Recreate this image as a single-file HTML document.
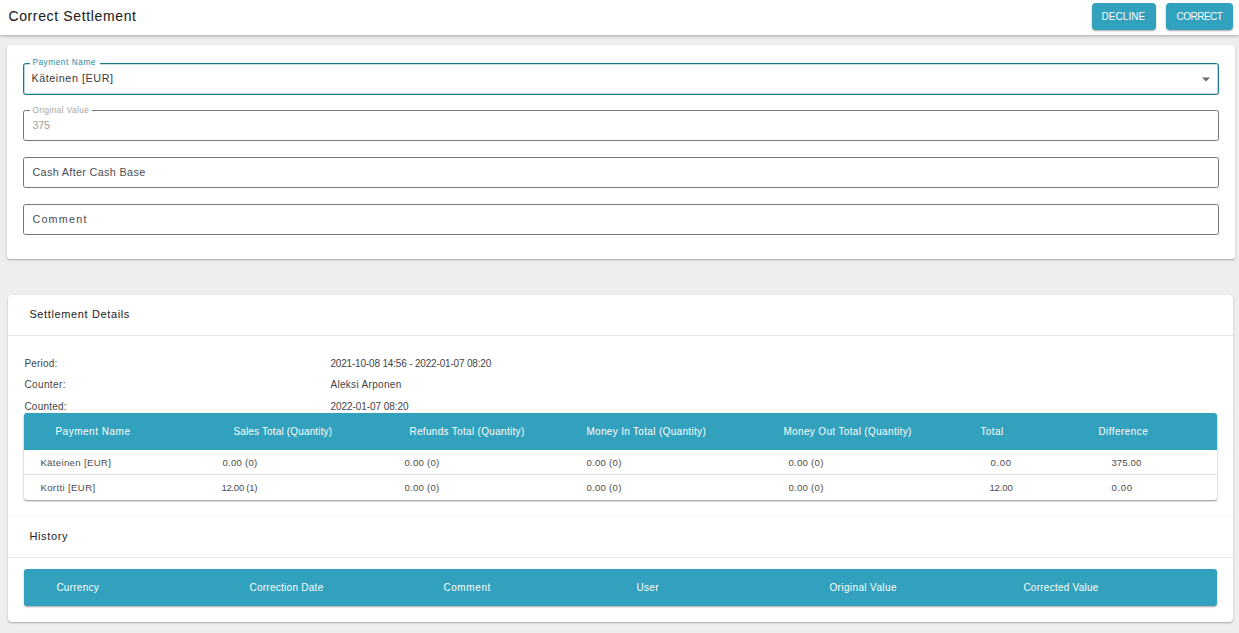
<!DOCTYPE html>
<html><head><meta charset="utf-8"><title>Correct Settlement</title>
<style>
html,body{margin:0;padding:0;}
body{width:1239px;height:633px;overflow:hidden;background:#eeeeee;position:relative;font-family:"Liberation Sans",sans-serif;}
.t{position:absolute;white-space:nowrap;line-height:1.149;font-family:"Liberation Sans",sans-serif;}
.hdr{position:absolute;left:0;top:0;width:1239px;height:35px;background:#fff;box-shadow:0 1px 3px rgba(0,0,0,.3);}
.btn{position:absolute;top:3px;height:27px;background:#32a1bd;border-radius:4px;box-shadow:0 1px 2px rgba(0,0,0,.35);}
.card{position:absolute;background:#fff;border-radius:3px;box-shadow:0 1px 2px rgba(0,0,0,.3);}
.fld{position:absolute;left:23px;width:1194px;border:1px solid #767676;border-radius:2.5px;}
.leg{position:absolute;height:4px;background:#fff;top:-2px;}
.div{position:absolute;left:0;right:0;height:1px;background:#e3e5e8;}
.th{position:absolute;left:24px;width:1193px;background:#32a1bd;}

</style></head><body>
<div class="hdr"></div>
<div class="btn" style="left:1092px;width:64px"></div>
<div class="btn" style="left:1166px;width:67px"></div>
<div class="card" style="left:7px;top:45px;width:1228px;height:214px">
  <div class="fld" style="left:16px;top:18px;height:30px;border:1px solid #1a7890;box-shadow:inset 0 0 0 0.3px #1a7890;width:1194px"><div class="leg" style="left:6px;width:70px"></div></div>
  <div class="fld" style="left:16px;top:65px;height:29px"><div class="leg" style="left:6px;width:62px"></div></div>
  <div class="fld" style="left:16px;top:112px;height:29px"></div>
  <div class="fld" style="left:16px;top:159px;height:29px"></div>
  <svg style="position:absolute;left:1195px;top:32px" width="9" height="5"><path d="M0 0.5 L8 0.5 L4 4.4Z" fill="#6a6a6a"/></svg>
</div>
<div class="card" style="left:8px;top:295px;width:1225px;height:221px;border-radius:4px 4px 0 0">
  <div class="div" style="top:40px"></div>
</div>
<div class="card" style="left:8px;top:516px;width:1225px;height:106px;border-radius:0 0 4px 4px">
  <div class="div" style="top:41px"></div>
  <div style="position:absolute;left:0;right:0;top:-1px;height:1px;background:#f6f6f6"></div>
</div>
<div style="position:absolute;left:24px;top:413px;width:1193px;height:87px;background:#fff;border-radius:3px;box-shadow:0 1px 2px rgba(0,0,0,.45);overflow:hidden">
  <div style="position:absolute;left:0;top:0;width:100%;height:37px;background:#32a1bd"></div>
  <div style="position:absolute;left:0;top:61px;width:100%;height:1px;background:#e0e0e0"></div>
</div>
<div style="position:absolute;left:24px;top:569px;width:1193px;height:37px;background:#32a1bd;border-radius:3px;box-shadow:0 1px 2px rgba(0,0,0,.35)"></div>

<span class="t" style="left:8.40px;top:8.09px;font-size:14px;color:#1e1e1e;letter-spacing:0.641px;-webkit-text-stroke:0.1px #1e1e1e;">Correct Settlement</span>
<span class="t" style="left:1101.40px;top:10.99px;font-size:10.0px;color:#ffffff;letter-spacing:0.083px;">DECLINE</span>
<span class="t" style="left:1176.40px;top:10.99px;font-size:10.0px;color:#ffffff;letter-spacing:-0.483px;">CORRECT</span>
<span class="t" style="left:32.40px;top:58.15px;font-size:8.2px;color:#2a8ba5;letter-spacing:0.600px;">Payment Name</span>
<span class="t" style="left:31.40px;top:72.05px;font-size:10.8px;color:#3a3a3a;letter-spacing:0.554px;">Käteinen [EUR]</span>
<span class="t" style="left:32.40px;top:105.98px;font-size:8.2px;color:#a4a4a4;letter-spacing:0.423px;">Original Value</span>
<span class="t" style="left:32.40px;top:118.95px;font-size:10.8px;color:#9e9e9e;letter-spacing:-0.200px;">375</span>
<span class="t" style="left:32.40px;top:165.75px;font-size:10.8px;color:#464c56;letter-spacing:0.347px;">Cash After Cash Base</span>
<span class="t" style="left:32.40px;top:212.95px;font-size:10.8px;color:#464c56;letter-spacing:1.200px;">Comment</span>
<span class="t" style="left:29.40px;top:308.27px;font-size:11px;color:#222222;letter-spacing:0.629px;">Settlement Details</span>
<span class="t" style="left:24.40px;top:357.89px;font-size:10.0px;color:#444444;letter-spacing:0.183px;">Period:</span>
<span class="t" style="left:24.40px;top:379.09px;font-size:10.0px;color:#444444;letter-spacing:0.386px;">Counter:</span>
<span class="t" style="left:24.40px;top:400.79px;font-size:10.0px;color:#444444;letter-spacing:0.229px;">Counted:</span>
<span class="t" style="left:330.40px;top:357.89px;font-size:10.0px;color:#444444;letter-spacing:-0.174px;">2021-10-08 14:56 - 2022-01-07 08:20</span>
<span class="t" style="left:330.40px;top:379.09px;font-size:10.0px;color:#444444;letter-spacing:0.315px;">Aleksi Arponen</span>
<span class="t" style="left:330.40px;top:400.79px;font-size:10.0px;color:#444444;letter-spacing:-0.060px;">2022-01-07 08:20</span>
<span class="t" style="left:55.40px;top:425.99px;font-size:10.0px;color:#ffffff;letter-spacing:0.518px;">Payment Name</span>
<span class="t" style="left:233.40px;top:425.99px;font-size:10.0px;color:#ffffff;letter-spacing:0.157px;">Sales Total (Quantity)</span>
<span class="t" style="left:409.40px;top:425.99px;font-size:10.0px;color:#ffffff;letter-spacing:0.313px;">Refunds Total (Quantity)</span>
<span class="t" style="left:586.40px;top:425.99px;font-size:10.0px;color:#ffffff;letter-spacing:0.325px;">Money In Total (Quantity)</span>
<span class="t" style="left:783.40px;top:425.99px;font-size:10.0px;color:#ffffff;letter-spacing:0.348px;">Money Out Total (Quantity)</span>
<span class="t" style="left:980.40px;top:425.99px;font-size:10.0px;color:#ffffff;letter-spacing:0.450px;">Total</span>
<span class="t" style="left:1098.40px;top:425.99px;font-size:10.0px;color:#ffffff;letter-spacing:0.444px;">Difference</span>
<span class="t" style="left:40.40px;top:457.16px;font-size:9.6px;color:#4d4d4d;letter-spacing:0.331px;">Käteinen [EUR]</span>
<span class="t" style="left:222.40px;top:457.16px;font-size:9.6px;color:#4d4d4d;letter-spacing:0.243px;">0.00 (0)</span>
<span class="t" style="left:404.40px;top:457.16px;font-size:9.6px;color:#4d4d4d;letter-spacing:0.257px;">0.00 (0)</span>
<span class="t" style="left:586.40px;top:457.16px;font-size:9.6px;color:#4d4d4d;letter-spacing:0.271px;">0.00 (0)</span>
<span class="t" style="left:788.40px;top:457.16px;font-size:9.6px;color:#4d4d4d;letter-spacing:0.271px;">0.00 (0)</span>
<span class="t" style="left:990.40px;top:457.16px;font-size:9.6px;color:#4d4d4d;letter-spacing:0.633px;">0.00</span>
<span class="t" style="left:1111.40px;top:457.16px;font-size:9.6px;color:#4d4d4d;letter-spacing:0.120px;">375.00</span>
<span class="t" style="left:40.40px;top:481.86px;font-size:9.6px;color:#4d4d4d;letter-spacing:0.373px;">Kortti [EUR]</span>
<span class="t" style="left:221.40px;top:481.86px;font-size:9.6px;color:#4d4d4d;letter-spacing:-0.287px;">12.00 (1)</span>
<span class="t" style="left:404.40px;top:481.86px;font-size:9.6px;color:#4d4d4d;letter-spacing:0.257px;">0.00 (0)</span>
<span class="t" style="left:586.40px;top:481.86px;font-size:9.6px;color:#4d4d4d;letter-spacing:0.271px;">0.00 (0)</span>
<span class="t" style="left:788.40px;top:481.86px;font-size:9.6px;color:#4d4d4d;letter-spacing:0.271px;">0.00 (0)</span>
<span class="t" style="left:989.40px;top:481.86px;font-size:9.6px;color:#4d4d4d;letter-spacing:-0.125px;">12.00</span>
<span class="t" style="left:1111.40px;top:481.86px;font-size:9.6px;color:#4d4d4d;letter-spacing:0.667px;">0.00</span>
<span class="t" style="left:29.40px;top:530.07px;font-size:11px;color:#222222;letter-spacing:0.667px;">History</span>
<span class="t" style="left:56.40px;top:581.79px;font-size:10.0px;color:#ffffff;letter-spacing:0.257px;">Currency</span>
<span class="t" style="left:249.40px;top:581.79px;font-size:10.0px;color:#ffffff;letter-spacing:0.271px;">Correction Date</span>
<span class="t" style="left:443.40px;top:581.79px;font-size:10.0px;color:#ffffff;letter-spacing:0.600px;">Comment</span>
<span class="t" style="left:636.40px;top:581.79px;font-size:10.0px;color:#ffffff;letter-spacing:0.333px;">User</span>
<span class="t" style="left:829.40px;top:581.79px;font-size:10.0px;color:#ffffff;letter-spacing:0.385px;">Original Value</span>
<span class="t" style="left:1023.40px;top:581.79px;font-size:10.0px;color:#ffffff;letter-spacing:0.250px;">Corrected Value</span>
</body></html>
